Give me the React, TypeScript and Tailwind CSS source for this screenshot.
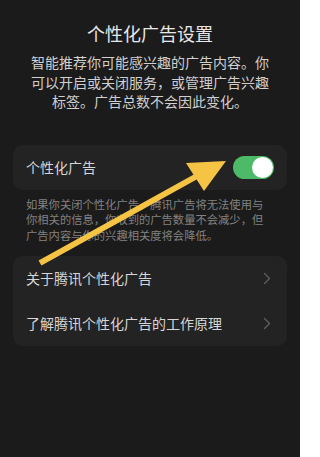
import React from "react";

function Chevron() {
  return (
    <svg width="8" height="13" viewBox="0 0 8 13" fill="none">
      <path d="M1.5 1.5L6.5 6.5L1.5 11.5" stroke="#5e5e5e" strokeWidth="1.4" strokeLinecap="round" strokeLinejoin="round" />
    </svg>
  );
}

export default function App() {
  return (
    <div
      className="relative w-[300px] h-[457px] overflow-hidden bg-[#1b1b1b]"
      style={{ fontFamily: '"Noto Sans CJK SC", "Noto Sans", sans-serif' }}
    >
      <div className="pt-[22px] text-center text-[18px] leading-[22px] text-[#e8e8e8]">个性化广告设置</div>
      <div className="mt-[9px] px-[30px] text-center text-[14px] leading-[19.5px] text-[#d0d0d0]">
        智能推荐你可能感兴趣的广告内容。你可以开启或关闭服务，或管理广告兴趣标签。广告总数不会因此变化。
      </div>

      <div className="mt-[33px] mx-[13px] h-[45px] rounded-[10px] bg-[#232323] pl-[13px] pr-[13px] flex items-center justify-between">
        <span className="text-[14px] text-[#d6d6d6]">个性化广告</span>
        <div className="w-[41px] h-[23px] rounded-full bg-[#4dba67] flex items-center justify-end pr-[1px]">
          <div className="w-[21px] h-[21px] rounded-full bg-white" />
        </div>
      </div>

      <div className="mt-[7px] pl-[26px] pr-[30px] text-[11.3px] leading-[15.5px] text-[#828282]">
        如果你关闭个性化广告，腾讯广告将无法使用与你相关的信息，你收到的广告数量不会减少，但广告内容与你的兴趣相关度将会降低。
      </div>

      <div className="mt-[13px] mx-[13px] rounded-[10px] bg-[#232323] flex flex-col">
        <div className="h-[45px] pl-[13px] pr-[16px] flex items-center justify-between">
          <span className="text-[14px] text-[#d6d6d6]">关于腾讯个性化广告</span>
          <Chevron />
        </div>
        <div className="h-[45px] pl-[13px] pr-[16px] flex items-center justify-between">
          <span className="text-[14px] text-[#d6d6d6]">了解腾讯个性化广告的工作原理</span>
          <Chevron />
        </div>
      </div>

      <svg className="absolute left-0 top-0" width="300" height="457" viewBox="0 0 300 457">
        <line x1="40" y1="263" x2="197" y2="176" stroke="#f5c445" strokeWidth="6" strokeLinecap="butt" />
        <polygon points="226,161 186,163 204,191" fill="#f5c445" />
      </svg>
    </div>
  );
}
